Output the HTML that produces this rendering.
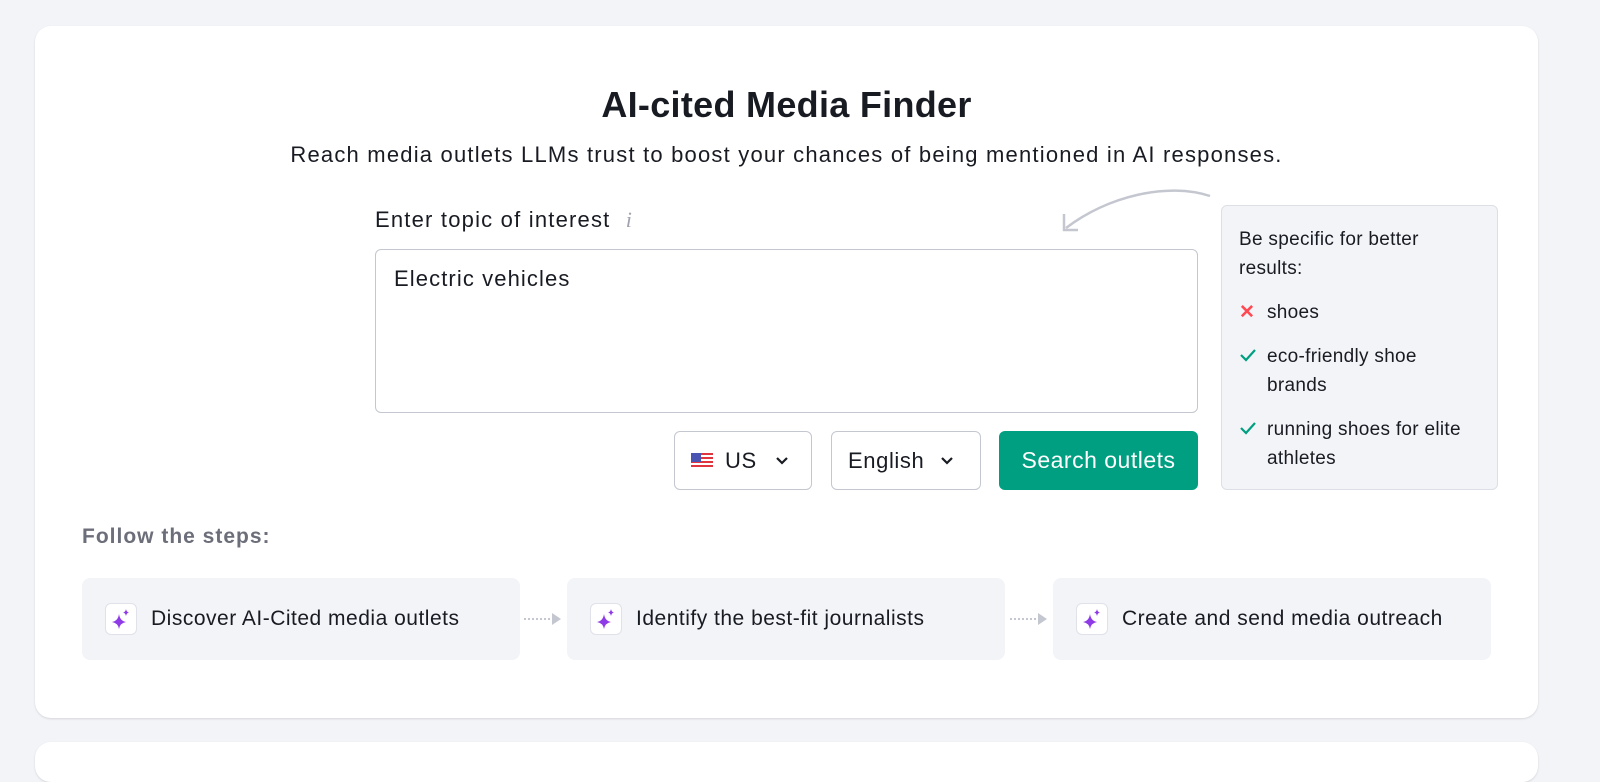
<!DOCTYPE html>
<html><head><style>
*{box-sizing:border-box;margin:0;padding:0}
body{width:1600px;height:760px;background:#f3f4f8;font-family:"Liberation Sans",sans-serif;color:#191b23;position:relative;overflow:hidden}
.card{position:absolute;left:35px;top:26px;width:1503px;height:692px;background:#fff;border-radius:16px;box-shadow:0 1px 2px rgba(0,0,0,.12)}
.card2{position:absolute;left:35px;top:742px;width:1503px;height:40px;background:#fff;border-radius:16px;box-shadow:0 1px 2px rgba(0,0,0,.12)}
.abs{position:absolute}
h1{position:absolute;left:0;width:1573px;top:84px;text-align:center;font-size:36px;font-weight:bold;letter-spacing:.3px}
.sub{position:absolute;left:0;width:1573px;top:142px;text-align:center;font-size:22px;letter-spacing:1.2px}
.lbl{left:375px;top:207px;font-size:22px;letter-spacing:1.2px}
.ta{left:375px;top:249px;width:823px;height:164px;border:1.5px solid #c4c7cf;border-radius:6px;padding:16px 18px;font-size:22px;letter-spacing:1.1px}
.sel{top:431px;height:59px;border:1.5px solid #c4c7cf;border-radius:6px;font-size:22px;letter-spacing:.6px;display:flex;align-items:center;padding-left:16px}
.btn{left:999px;top:431px;width:199px;height:59px;background:#009f81;border-radius:6px;color:#fff;font-size:23px;letter-spacing:.5px;display:flex;align-items:center;justify-content:center}
.tip{left:1221px;top:205px;width:277px;height:285px;background:#f3f4f8;border:1.5px solid #dcdfe5;border-radius:6px;padding:19px 36px 20px 17px;font-size:19px;letter-spacing:.3px;line-height:29px}
.tip .r{display:flex;margin-top:15px}
.tip .ic{width:28px;flex:none}
.steps{left:82px;top:525px;font-size:21px;letter-spacing:1px;font-weight:bold;color:#6c6e79}
.step{top:578px;height:82px;background:#f3f4f8;border-radius:8px;display:flex;align-items:center;padding-left:23px;font-size:21px;letter-spacing:.5px}
.sp{width:32px;height:32px;background:#fff;border:1px solid #e0e1e9;border-radius:6px;margin-right:14px;display:flex;align-items:center;justify-content:center}
.arr{top:612px;width:40px;height:14px}
</style></head><body>
<div class="card"></div><div class="card2"></div>
<h1>AI-cited Media Finder</h1>
<div class="sub">Reach media outlets LLMs trust to boost your chances of being mentioned in AI responses.</div>
<div class="abs lbl">Enter topic of interest <span style="color:#a0a3ad;font-style:italic;font-family:'Liberation Serif',serif;margin-left:8px">i</span></div>
<svg class="abs" style="left:1058px;top:188px" width="156" height="48" viewBox="0 0 156 48"><path d="M152 8 C110 -6 50 8 8 40" fill="none" stroke="#c4c7cf" stroke-width="2.5"/><path d="M6 26 L6 42 L20 42" fill="none" stroke="#c4c7cf" stroke-width="2.5"/></svg>
<div class="abs ta">Electric vehicles</div>
<div class="abs sel" style="left:674px;width:138px"><svg width="22" height="16" viewBox="0 0 22 16" style="margin-right:12px"><rect width="22" height="16" fill="#fff"/><g fill="#e0343f"><rect y="0" width="22" height="2"/><rect y="4" width="22" height="2"/><rect y="8" width="22" height="2"/><rect y="12" width="22" height="2"/></g><rect width="10" height="9" fill="#4a55b3"/></svg>US<svg width="14" height="10" style="margin-left:18px" viewBox="0 0 14 10"><path d="M2 2l5 5 5-5" fill="none" stroke="#191b23" stroke-width="2.2"/></svg></div>
<div class="abs sel" style="left:831px;width:150px">English<svg width="14" height="10" style="margin-left:16px" viewBox="0 0 14 10"><path d="M2 2l5 5 5-5" fill="none" stroke="#191b23" stroke-width="2.2"/></svg></div>
<div class="abs btn">Search outlets</div>
<div class="abs tip">Be specific for better results:
<div class="r"><span class="ic" style="color:#ff4953;font-weight:bold">✕</span><span>shoes</span></div>
<div class="r"><span class="ic"><svg width="18" height="14" viewBox="0 0 18 14"><path d="M2 7l5 5 9-10" fill="none" stroke="#009f81" stroke-width="2.2"/></svg></span><span>eco-friendly shoe brands</span></div>
<div class="r"><span class="ic"><svg width="18" height="14" viewBox="0 0 18 14"><path d="M2 7l5 5 9-10" fill="none" stroke="#009f81" stroke-width="2.2"/></svg></span><span>running shoes for elite athletes</span></div>
</div>
<div class="abs steps">Follow the steps:</div>
<div class="abs step" style="left:82px;width:438px"><div class="sp"><svg width="22" height="22" viewBox="0 0 22 22"><path d="M9 6 Q10 13 16 14 Q10 15 9 21 Q8 15 2 14 Q8 13 9 6Z M16 1 Q16.5 4 19 4.5 Q16.5 5 16 8 Q15.5 5 13 4.5 Q15.5 4 16 1Z" fill="#8e3ae6"/></svg></div>Discover AI-Cited media outlets</div>
<svg class="abs arr" style="left:524px" viewBox="0 0 40 14"><path d="M0 7H28" stroke="#c4c7cf" stroke-width="2" stroke-dasharray="2 2"/><path d="M28 1l9 6-9 6z" fill="#c4c7cf"/></svg>
<div class="abs step" style="left:567px;width:438px"><div class="sp"><svg width="22" height="22" viewBox="0 0 22 22"><path d="M9 6 Q10 13 16 14 Q10 15 9 21 Q8 15 2 14 Q8 13 9 6Z M16 1 Q16.5 4 19 4.5 Q16.5 5 16 8 Q15.5 5 13 4.5 Q15.5 4 16 1Z" fill="#8e3ae6"/></svg></div>Identify the best-fit journalists</div>
<svg class="abs arr" style="left:1010px" viewBox="0 0 40 14"><path d="M0 7H28" stroke="#c4c7cf" stroke-width="2" stroke-dasharray="2 2"/><path d="M28 1l9 6-9 6z" fill="#c4c7cf"/></svg>
<div class="abs step" style="left:1053px;width:438px"><div class="sp"><svg width="22" height="22" viewBox="0 0 22 22"><path d="M9 6 Q10 13 16 14 Q10 15 9 21 Q8 15 2 14 Q8 13 9 6Z M16 1 Q16.5 4 19 4.5 Q16.5 5 16 8 Q15.5 5 13 4.5 Q15.5 4 16 1Z" fill="#8e3ae6"/></svg></div>Create and send media outreach</div>
</body></html>
